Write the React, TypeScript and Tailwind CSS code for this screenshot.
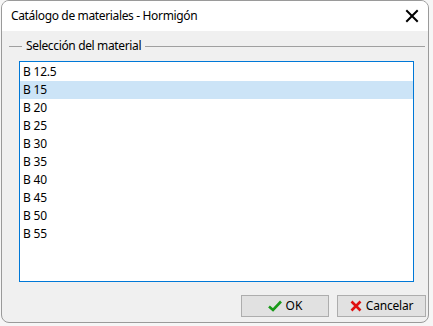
import React from "react";

const items = ["B 12.5", "B 15", "B 20", "B 25", "B 30", "B 35", "B 40", "B 45", "B 50", "B 55"];

export default function App() {
  return (
    <div className="w-[433px] h-[326px] bg-[#f6f6f6] relative overflow-hidden" style={{ fontFamily: '"Noto Sans", "Open Sans", sans-serif' }}>
      <div className="absolute left-[1px] top-0 w-[428px] h-[323px] rounded-[8px] border border-[#9a9a9a] bg-[#f0f0f0] overflow-hidden flex flex-col">
        <div className="h-[30px] bg-white flex items-center justify-between pl-[9px] pr-[8px] shrink-0">
          <span className="text-[12px] text-black leading-none tracking-[-0.35px]">Catálogo de materiales - Hormigón</span>
          <svg width="14" height="14" viewBox="0 0 14 14" className="mr-[1px]">
            <path d="M2 2 L12 12 M12 2 L2 12" stroke="#000" strokeWidth="2" strokeLinecap="square" />
          </svg>
        </div>
        <div className="flex items-center mt-[6px] h-[18px] pl-[7px] pr-[3px]">
          <div className="w-[13px] h-px bg-[#a0a0a0]" />
          <span className="text-[12px] text-black px-[4px] leading-none tracking-[-0.35px]">Selección del material</span>
          <div className="flex-1 h-px bg-[#a0a0a0]" />
        </div>
        <div className="ml-[17px] mt-[6px] w-[395px] h-[221px] bg-white border border-[#0078d7] flex flex-col pt-[1px]">
          {items.map((it, i) => (
            <div
              key={it}
              className={`h-[18px] flex items-center pl-[3px] text-[12px] text-black leading-none tracking-[-0.2px] ${i === 1 ? "bg-[#cce4f7]" : ""}`}
            >
              {it}
            </div>
          ))}
        </div>
        <div className="flex justify-end gap-[8px] mt-[13px] pr-[2px]">
          <button className="w-[88px] h-[22px] bg-[#e1e1e1] border border-[#adadad] flex items-center justify-center gap-[4px] text-[12px] text-black">
            <svg width="14" height="12" viewBox="0 0 14 12">
              <path d="M1 6.5 L5 10 L13 1.5" stroke="#1a9a1a" strokeWidth="2.6" fill="none" />
            </svg>
            <span>OK</span>
          </button>
          <button className="w-[89px] h-[22px] bg-[#e1e1e1] border border-[#adadad] flex items-center justify-center gap-[4px] text-[12px] text-black">
            <svg width="12" height="12" viewBox="0 0 12 12">
              <path d="M1.5 1.5 L10.5 10.5 M10.5 1.5 L1.5 10.5" stroke="#e01010" strokeWidth="2.6" />
            </svg>
            <span className="tracking-[-0.2px]">Cancelar</span>
          </button>
        </div>
      </div>
    </div>
  );
}
